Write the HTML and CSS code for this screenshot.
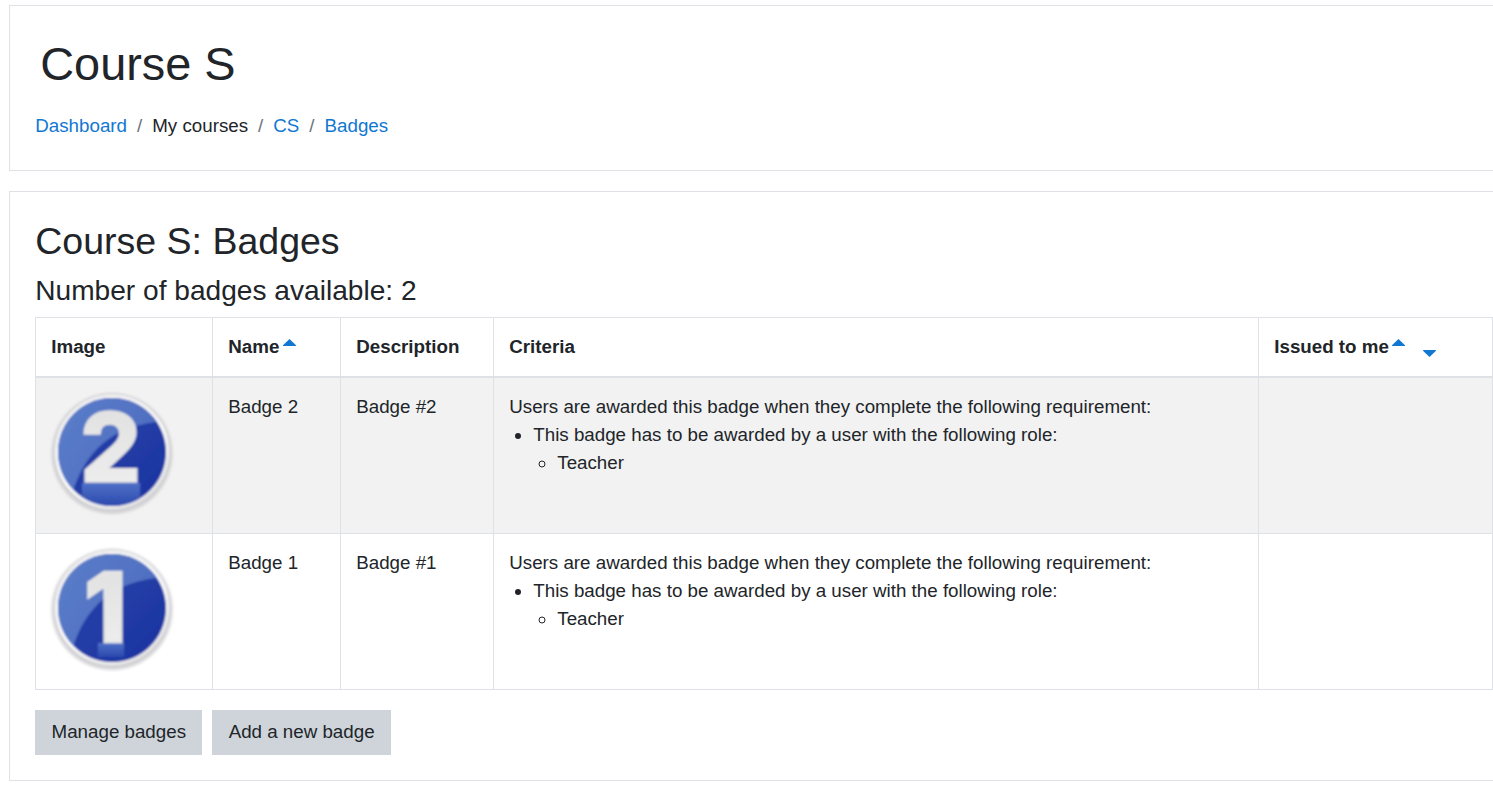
FILE: index.html
```html
<!DOCTYPE html>
<html lang="en">
<head>
<meta charset="utf-8">
<title>Course S: Badges</title>
<link rel="stylesheet" href="styles.css">
</head>
<body>
<svg class="defs" width="0" height="0" aria-hidden="true">
  <defs>
    <radialGradient id="ring" cx="50%" cy="50%" r="50%">
      <stop offset="0.86" stop-color="#f6f6f6"/>
      <stop offset="0.93" stop-color="#cbcbce"/>
      <stop offset="1" stop-color="#cfcfd2" stop-opacity="0.3"/>
    </radialGradient>
    <linearGradient id="ringlit" x1="0.2" y1="0" x2="0.8" y2="1">
      <stop offset="0" stop-color="#f2f2f4"/>
      <stop offset="0.55" stop-color="#ffffff"/>
      <stop offset="1" stop-color="#e2e2e4"/>
    </linearGradient>
    <linearGradient id="blue" x1="0" y1="0" x2="1" y2="1">
      <stop offset="0" stop-color="#2c48ac"/>
      <stop offset="1" stop-color="#1a32a0"/>
    </linearGradient>
    <linearGradient id="gloss" x1="0" y1="0" x2="1" y2="0.6">
      <stop offset="0" stop-color="#5c80ca"/>
      <stop offset="1" stop-color="#4a68be"/>
    </linearGradient>
    <linearGradient id="digit" x1="0" y1="0" x2="0" y2="1">
      <stop offset="0" stop-color="#dedede"/>
      <stop offset="1" stop-color="#f0f0f0"/>
    </linearGradient>
    <linearGradient id="shine" x1="0" y1="0" x2="0" y2="1">
      <stop offset="0" stop-color="#4e70c6"/>
      <stop offset="1" stop-color="#2c48ae"/>
    </linearGradient>
    <clipPath id="disc"><circle cx="61" cy="59" r="54"/></clipPath>
    <filter id="soft" x="-5%" y="-5%" width="110%" height="110%"><feGaussianBlur stdDeviation="0.9"/></filter>
  </defs>
</svg>

<div class="page">
  <header class="card head-card">
    <h1 class="course-title">Course S</h1>
    <nav class="crumbs">
      <a href="#">Dashboard</a><span class="sep">/</span><span>My courses</span><span class="sep">/</span><a href="#">CS</a><span class="sep">/</span><a href="#">Badges</a>
    </nav>
  </header>

  <main class="card main-card">
    <h2 class="page-title">Course S: Badges</h2>
    <h3 class="count">Number of badges available: 2</h3>
    <table class="badges">
      <colgroup>
        <col class="c-image"><col class="c-name"><col class="c-desc"><col class="c-crit"><col class="c-issued">
      </colgroup>
      <thead>
        <tr>
          <th>Image</th>
          <th>Name<svg class="sort up" width="13" height="7" viewBox="0 0 13 7"><path d="M6.5 0 13 6.2q.2.8-.6.8H.6q-.8 0-.6-.8Z"/></svg></th>
          <th>Description</th>
          <th>Criteria</th>
          <th>Issued to me<svg class="sort up" width="13" height="7" viewBox="0 0 13 7"><path d="M6.5 0 13 6.2q.2.8-.6.8H.6q-.8 0-.6-.8Z"/></svg><svg class="sort down" width="13" height="7" viewBox="0 0 13 7"><path d="M6.5 7 13 .8q.2-.8-.6-.8H.6q-.8 0-.6.8Z"/></svg></th>
        </tr>
      </thead>
      <tbody>
        <tr class="striped">
          <td class="img-cell">
            <svg class="badge" width="125" height="125" viewBox="0 0 125 125" role="img" aria-label="Badge 2">
              <g filter="url(#soft)">
                <circle cx="61" cy="60.5" r="61.5" fill="url(#ring)"/>
                <circle cx="61" cy="59" r="55.5" fill="none" stroke="url(#ringlit)" stroke-width="3"/>
                <circle cx="61" cy="59" r="54" fill="url(#blue)"/>
                <g clip-path="url(#disc)">
                  <path d="M0 0H125V28C96 28 42 33 22 99L20 125H0Z" fill="url(#gloss)"/>
                  <rect x="31" y="90" width="58" height="24" fill="url(#shine)"/>
                </g>
                <text class="digit" x="59.5" y="89" text-anchor="middle" fill="url(#digit)" stroke="#e6e6e6" stroke-width="1.5">2</text>
              </g>
            </svg>
          </td>
          <td>Badge 2</td>
          <td>Badge #2</td>
          <td>
            Users are awarded this badge when they complete the following requirement:
            <ul class="l1"><li>This badge has to be awarded by a user with the following role:
              <ul class="l2"><li>Teacher</li></ul>
            </li></ul>
          </td>
          <td></td>
        </tr>
        <tr>
          <td class="img-cell">
            <svg class="badge" width="125" height="125" viewBox="0 0 125 125" role="img" aria-label="Badge 1">
              <g filter="url(#soft)">
                <circle cx="61" cy="60.5" r="61.5" fill="url(#ring)"/>
                <circle cx="61" cy="59" r="55.5" fill="none" stroke="url(#ringlit)" stroke-width="3"/>
                <circle cx="61" cy="59" r="54" fill="url(#blue)"/>
                <g clip-path="url(#disc)">
                  <path d="M0 0H125V28C96 28 42 33 22 99L20 125H0Z" fill="url(#gloss)"/>
                  <rect x="47" y="94" width="26" height="14" fill="url(#shine)"/>
                </g>
                <text class="digit" x="54.5" y="93" text-anchor="middle" fill="url(#digit)" stroke="#e6e6e6" stroke-width="2.5">1</text>
              </g>
            </svg>
          </td>
          <td>Badge 1</td>
          <td>Badge #1</td>
          <td>
            Users are awarded this badge when they complete the following requirement:
            <ul class="l1"><li>This badge has to be awarded by a user with the following role:
              <ul class="l2"><li>Teacher</li></ul>
            </li></ul>
          </td>
          <td></td>
        </tr>
      </tbody>
    </table>
    <div class="actions">
      <button class="btn" type="button">Manage badges</button>
      <button class="btn" type="button">Add a new badge</button>
    </div>
  </main>
</div>
</body>
</html>
```
FILE: styles.css
```css
html, body {
  margin: 0;
  padding: 0;
  overflow: hidden;
  background: #fff;
}
body {
  font-family: "Liberation Sans", Arial, sans-serif;
  font-size: 18.75px;
  line-height: 28px;
  color: #212529;
}
.defs { position: absolute; }
.page {
  width: 1520px;
  padding: 5px 0 0 9px;
  display: flex;
  flex-direction: column;
  gap: 20px;
}
.card {
  border: 1px solid #dee2e6;
  box-sizing: border-box;
  background: #fff;
}
.head-card {
  height: 166px;
  padding: 0 25.25px;
}
.course-title {
  margin: 0;
  padding: 30px 0 0 5px;
  font-weight: 400;
  font-size: 46.875px;
  line-height: 56px;
}
.crumbs {
  margin-top: 20px;
  display: flex;
  height: 28px;
}
.crumbs a { color: #1177d1; text-decoration: none; }
.sep {
  padding: 0 10px;
  color: #6a737b;
}
.main-card {
  height: 590px;
  padding: 27px 25.25px 0;
}
.page-title {
  margin: 0;
  font-weight: 400;
  font-size: 37.5px;
  line-height: 45px;
}
.count {
  margin: 10px 0 0;
  font-weight: 400;
  font-size: 28.125px;
  line-height: 34px;
}
.badges {
  margin-top: 9px;
  width: 1457px;
  table-layout: fixed;
  border-collapse: collapse;
}
.c-image { width: 177px; }
.c-name { width: 128px; }
.c-desc { width: 153px; }
.c-crit { width: 765px; }
.c-issued { width: 234px; }
.badges th, .badges td {
  border: 1px solid #dee2e6;
  padding: 15px;
  vertical-align: top;
  text-align: left;
}
.badges th {
  height: 59px;
  box-sizing: border-box;
  border-bottom: 2px solid #dee2e6;
  font-weight: 700;
  white-space: nowrap;
}
.badges tbody tr { height: 156px; }
.striped td { background: #f2f2f2; }
.img-cell { line-height: 0; }
.badge { display: block; overflow: visible; }
.digit {
  font-family: Inter, "Liberation Sans", sans-serif;
  font-weight: 800;
  font-size: 96px;
}
.sort { fill: #1177d1; position: relative; }
.sort.up { margin-left: 3.5px; top: -6px; vertical-align: middle; }
.sort.down { margin-left: 18px; top: 5px; vertical-align: middle; }
.l1, .l2 {
  margin: 0;
  padding-left: 24px;
}
.l1 { list-style: disc; }
.l2 { list-style: circle; }
.actions {
  margin-top: 20px;
  display: flex;
  gap: 10px;
}
.btn {
  height: 45px;
  padding: 0 16.3px 1px;
  border: 0;
  background: #ced4da;
  color: #212529;
  font-family: inherit;
  font-size: 18.75px;
  line-height: 28px;
}
```
